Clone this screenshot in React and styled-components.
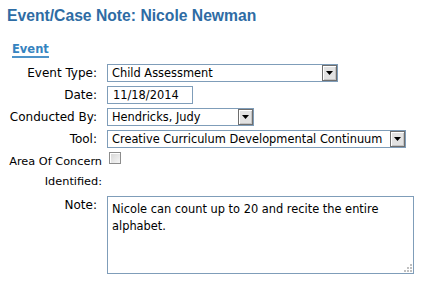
import React from 'react';
import styled, { createGlobalStyle } from 'styled-components';

const GlobalStyle = createGlobalStyle`
  body {
    margin: 0;
    background: #ffffff;
    font-family: 'DejaVu Sans', Verdana, sans-serif;
    font-size: 12px;
    color: #000;
  }
`

const Page = styled.div`
  padding: 5px 6px;
`

const Title = styled.h1`
  margin: 0 0 0 1px;
  font-family: 'Liberation Sans', Arial, sans-serif;
  font-size: 15.7px;
  font-weight: bold;
  color: #2e6ca4;
  line-height: 22px;
`

const SectionLink = styled.a`
  display: inline-block;
  margin: 16px 0 0 6px;
  font-size: 11.5px;
  font-weight: bold;
  color: #3583c0;
  text-decoration: none;
  border-bottom: 2px solid #4d93c9;
  line-height: 13px;
`

const Form = styled.div`
  display: grid;
  grid-template-columns: 97px 1fr;
  column-gap: 4px;
  row-gap: 4px;
  margin-top: 6px;
`

const Label = styled.div`
  text-align: right;
  white-space: nowrap;
  font-size: ${p => p.tall ? '11.3px' : '12px'};
  line-height: ${p => p.tall ? '20px' : '18px'};
  padding-right: ${p => p.tall ? 1 : 6}px;
`

const Field = styled.div`
  display: flex;
  align-items: flex-start;
  font-size: 11.4px;
`

const SelectBox = styled.div`
  width: ${p => p.w}px;
  height: 18px;
  box-sizing: border-box;
  border: 1px solid #7f9db9;
  display: flex;
  align-items: center;
  padding-left: 4px;
  background: #fff;
`

const SelectText = styled.span`
  flex: 1;
  white-space: nowrap;
  overflow: hidden;
`

const Arrow = styled.span`
  width: 15px;
  height: 16px;
  box-sizing: border-box;
  border: 1px solid #6e6e6e;
  box-shadow: inset 1px 1px 0 #ffffff, inset -1px -1px 0 #c4c4c4;
  background: #e2e2e2;
  display: flex;
  align-items: center;
  justify-content: center;
`

const TextInput = styled.div`
  width: 86px;
  height: 18px;
  box-sizing: border-box;
  border: 1px solid #7f9db9;
  padding-left: 5px;
  line-height: 16px;
`

const Check = styled.span`
  width: 12px;
  height: 12px;
  margin: 0 0 0 2px;
  box-sizing: border-box;
  border: 1px solid #8c8c8c;
  box-shadow: inset 1px 1px 0 #ffffff;
  background: linear-gradient(135deg, #d4d4d4, #f6f6f6);
`

const NoteArea = styled.div`
  position: relative;
  width: 307px;
  height: 78px;
  box-sizing: border-box;
  border: 1px solid #7f9db9;
  padding: 4px 4px;
  line-height: 17px;
`

const Grip = styled.svg`
  position: absolute;
  right: 1px;
  bottom: 1px;
`

const Select = ({ w, children }) => (
  <SelectBox w={w}>
    <SelectText>{children}</SelectText>
    <Arrow>
      <svg width="7" height="4" viewBox="0 0 7 4"><path d="M0 0h7L3.5 4z" fill="#000" /></svg>
    </Arrow>
  </SelectBox>
)

const App = () => (
  <>
    <GlobalStyle />
    <Page>
      <Title>Event/Case Note: Nicole Newman</Title>
      <SectionLink href="#">Event</SectionLink>
      <Form>
        <Label>Event Type:</Label>
        <Field><Select w={231}>Child Assessment</Select></Field>
        <Label>Date:</Label>
        <Field><TextInput>11/18/2014</TextInput></Field>
        <Label>Conducted By:</Label>
        <Field><Select w={147}>Hendricks, Judy</Select></Field>
        <Label>Tool:</Label>
        <Field><Select w={299}>Creative Curriculum Developmental Continuum</Select></Field>
        <Label tall>Area Of Concern<br />Identified:</Label>
        <Field><Check /></Field>
        <Label>Note:</Label>
        <Field>
          <NoteArea>
            Nicole can count up to 20 and recite the entire alphabet.
            <Grip width="9" height="9" viewBox="0 0 9 9">
              <g fill="#c0c0c0">
                <rect x="7" y="1" width="2" height="2" />
                <rect x="4" y="4" width="2" height="2" />
                <rect x="7" y="4" width="2" height="2" />
                <rect x="1" y="7" width="2" height="2" />
                <rect x="4" y="7" width="2" height="2" />
                <rect x="7" y="7" width="2" height="2" />
              </g>
            </Grip>
          </NoteArea>
        </Field>
      </Form>
    </Page>
  </>
);

export default App;
